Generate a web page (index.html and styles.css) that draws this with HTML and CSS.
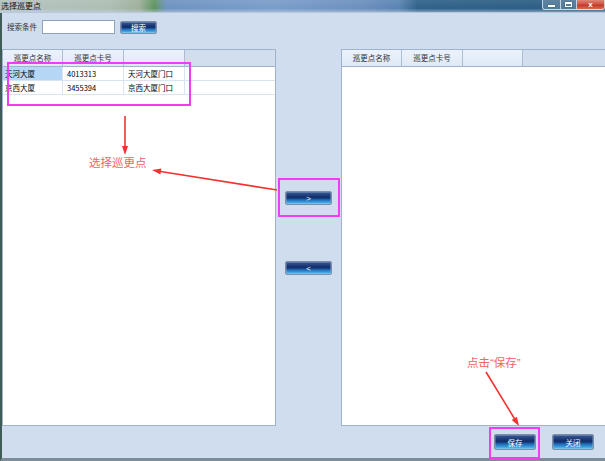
FILE: index.html
```html
<!DOCTYPE html>
<html>
<head>
<meta charset="utf-8">
<link rel="stylesheet" href="styles.css">
</head>
<body>
<div class="window">
  <div class="titlebar">
    <span class="title">选择巡更点</span>
    <div class="controls">
      <span class="ctl min"><span class="min-bar"></span></span>
      <span class="ctl max"><span class="max-box"></span></span>
      <span class="ctl close">x</span>
    </div>
  </div>
  <div class="client">
    <div class="search">
      <span class="label">搜索条件</span>
      <span class="input"></span>
      <button class="btn btn-search">搜索</button>
    </div>
    <div class="main">
      <div class="panel left">
        <div class="grid">
          <div class="hd">巡更点名称</div>
          <div class="hd">巡更点卡号</div>
          <div class="hd"></div>
          <div class="hd rest"></div>

          <div class="cell first sel">天河大厦</div>
          <div class="cell">4013313</div>
          <div class="cell">天河大厦门口</div>
          <div class="cell rest"></div>

          <div class="cell first">京西大厦</div>
          <div class="cell">3455394</div>
          <div class="cell">京西大厦门口</div>
          <div class="cell rest"></div>
        </div>
      </div>
      <div class="middle">
        <button class="btn btn-arrow">&gt;</button>
        <button class="btn btn-arrow">&lt;</button>
      </div>
      <div class="panel right">
        <div class="grid grid-right">
          <div class="hd">巡更点名称</div>
          <div class="hd">巡更点卡号</div>
          <div class="hd"></div>
          <div class="hd rest"></div>
        </div>
      </div>
    </div>
    <div class="footer">
      <button class="btn btn-foot">保存</button>
      <button class="btn btn-foot">关闭</button>
    </div>
  </div>

  <svg class="annot" width="605" height="461" viewBox="0 0 605 461">
    <rect x="8" y="63" width="182" height="42" class="mag"/>
    <rect x="279" y="179" width="60" height="37" class="mag"/>
    <rect x="490" y="428" width="49" height="30" class="mag"/>

    <line x1="125" y1="116" x2="125" y2="148" class="arr"/>
    <polygon points="125,155 122,146 128,146" class="head"/>

    <line x1="277" y1="190" x2="159" y2="171.2" class="arr"/>
    <polygon points="152,170 161.4,168.5 160.4,174.4" class="head"/>

    <line x1="486" y1="372" x2="515" y2="419.5" class="arr"/>
    <polygon points="519,426 516.9,416.7 511.7,419.9" class="head"/>

    <text x="89" y="167" class="note">选择巡更点</text>
    <text x="467" y="367" class="note">点击<tspan class="q">“</tspan>保存<tspan class="q">”</tspan></text>
  </svg>
</div>
</body>
</html>
```

FILE: styles.css
```css
* {
  box-sizing: border-box;
}

html,
body {
  margin: 0;
  padding: 0;
}

body {
  width: 605px;
  height: 461px;
  overflow: hidden;
  font-family: "Noto Sans CJK SC", "Liberation Sans", sans-serif;
}

.window {
  position: relative;
  width: 605px;
  height: 461px;
  display: flex;
  flex-direction: column;
}

/* Title bar */
.titlebar {
  height: 13px;
  display: flex;
  justify-content: space-between;
  align-items: flex-start;
  background:
    linear-gradient(180deg, rgba(255, 255, 255, 0.08) 0%, rgba(255, 255, 255, 0) 70%, rgba(200, 215, 230, 0.5) 100%),
    linear-gradient(90deg, #b4c3c0 0%, #aebdb3 18%, #9fb09c 23%, #5f945f 25.5%, #6d93c1 27.5%, #7a9dca 45%, #6b8fbe 60%, #5a83b2 66%, #2f6289 69%, #2b5b82 100%);
  border-bottom: 1px solid #b8c8da;
}

.title {
  font-size: 8px;
  line-height: 11px;
  color: #111;
  padding-left: 1px;
}

.controls {
  display: flex;
  height: 10px;
}

.ctl {
  height: 10px;
  display: flex;
  align-items: center;
  justify-content: center;
  border: 1px solid rgba(235, 242, 250, 0.75);
  border-top: none;
}

.min {
  width: 19px;
  background: rgba(255, 255, 255, 0.18);
  border-radius: 0 0 0 3px;
  align-items: flex-end;
  padding-bottom: 2px;
}

.min-bar {
  width: 7px;
  height: 2px;
  background: #fff;
  box-shadow: 0 0 1px #333;
}

.max {
  width: 16px;
  background: rgba(255, 255, 255, 0.18);
  border-left: none;
}

.max-box {
  width: 7px;
  height: 5px;
  border: 1px solid #fff;
  border-top-width: 2px;
  box-shadow: 0 0 1px #333;
}

.close {
  width: 28px;
  background: linear-gradient(180deg, #e08577 0%, #d05444 45%, #c23a28 55%, #d86a52 100%);
  border-left: none;
  border-radius: 0 0 3px 0;
  color: #fff;
  font-family: "Liberation Sans", sans-serif;
  font-weight: bold;
  font-size: 8px;
  line-height: 9px;
}

/* Client area */
.client {
  flex: 1;
  display: flex;
  flex-direction: column;
  background: #d0ddee;
  border-left: 2px solid #3f5c56;
  border-bottom: 3px solid #7d8d98;
}

.search {
  height: 36px;
  display: flex;
  align-items: flex-start;
  gap: 5px;
  padding: 7px 0 0 5px;
}

.label {
  font-size: 7.5px;
  line-height: 14px;
  color: #333;
}

.input {
  width: 73px;
  height: 14px;
  background: #fff;
  border: 1px solid #8ea3bd;
}

.btn {
  padding: 0;
  margin: 0;
  font-family: "Noto Sans CJK SC", "Liberation Sans", sans-serif;
  font-size: 7.5px;
  color: #fff;
  border: 1px solid #7f8ea4;
  border-radius: 2px;
  background: linear-gradient(180deg, #3a5a94 0%, #14306f 40%, #12326f 50%, #1d63ae 62%, #3a9ee0 85%, #6cc8f2 100%);
  box-shadow: inset 0 0 0 1px rgba(160, 190, 230, 0.35);
  display: flex;
  align-items: center;
  justify-content: center;
}

.btn-search {
  width: 37px;
  height: 13px;
  margin-top: 1px;
}

.main {
  height: 377px;
  display: flex;
}

.panel {
  background: #fff;
  border: 1px solid #9fb3cc;
}

.panel.left {
  width: 274px;
}

.panel.right {
  width: 264px;
  border-right: none;
}

.middle {
  width: 65px;
  display: flex;
  flex-direction: column;
  align-items: flex-start;
  gap: 56px;
  padding: 142px 0 0 9px;
}

.btn-arrow {
  width: 47px;
  height: 14px;
  font-family: "Liberation Sans", sans-serif;
  font-size: 8px;
}

.grid {
  display: grid;
  grid-template-columns: 60px 61px 61px 1fr;
}

.grid-right {
  grid-template-columns: 60px 61px 60px 1fr;
}

.hd {
  height: 17px;
  border-right: 1px solid #aabdd4;
  border-bottom: 1px solid #9fb3cc;
  background: linear-gradient(180deg, #ebf2fb 0%, #dfe9f6 100%);
  font-size: 7.5px;
  line-height: 16px;
  text-align: center;
  color: #333;
  white-space: nowrap;
}

.hd.rest {
  background: #d2deee;
  border-right: none;
}

.cell {
  height: 14px;
  border-right: 1px solid #d9e4f1;
  border-bottom: 1px solid #d9e4f1;
  font-size: 7.5px;
  line-height: 13px;
  padding-left: 4px;
  color: #000;
  white-space: nowrap;
  overflow: hidden;
}

.cell.first {
  padding-left: 2px;
}

.cell.sel {
  background: #b6d6f6;
}

.cell.rest {
  border-right: none;
}

.footer {
  height: 32px;
  display: flex;
  justify-content: flex-end;
  align-items: flex-start;
  gap: 16px;
  padding: 8px 11px 0 0;
}

.btn-foot {
  width: 42px;
  height: 16px;
}

/* Annotation overlay */
.annot {
  position: absolute;
  left: 0;
  top: 0;
  pointer-events: none;
}

.mag {
  fill: none;
  stroke: #f23cf2;
  stroke-width: 2;
}

.arr {
  stroke: #f43232;
  stroke-width: 1.6;
}

.head {
  fill: #f43232;
}

.note {
  font-family: "Noto Sans CJK SC", sans-serif;
  font-size: 11.5px;
  fill: #f86262;
}

.q {
  font-family: "Liberation Sans", sans-serif;
}
```
